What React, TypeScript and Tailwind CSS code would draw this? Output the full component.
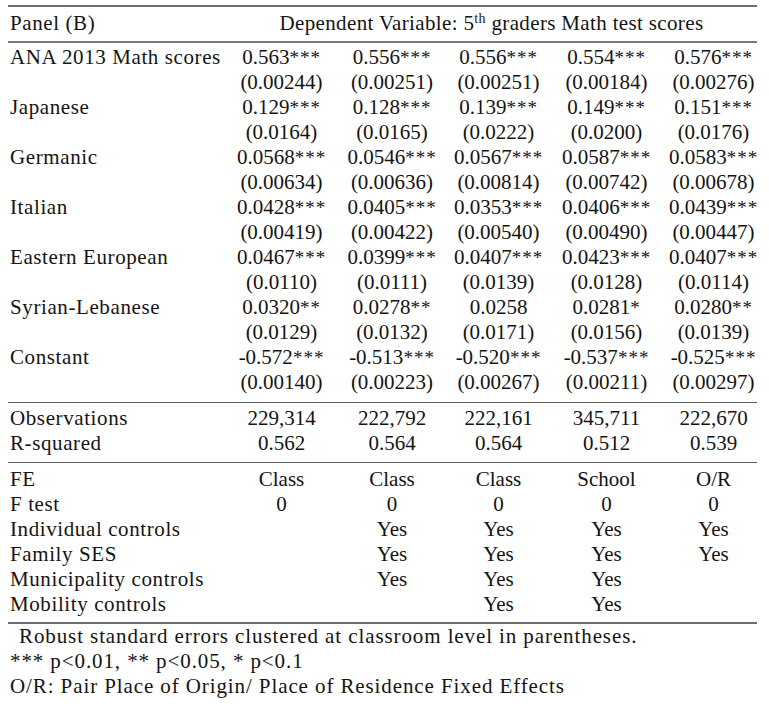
import React from "react";

type Row = { label: string; cells: string[] };

const coefRows: Row[] = [
  { label: "ANA 2013 Math scores", cells: ["0.563***", "0.556***", "0.556***", "0.554***", "0.576***"] },
  { label: "", cells: ["(0.00244)", "(0.00251)", "(0.00251)", "(0.00184)", "(0.00276)"] },
  { label: "Japanese", cells: ["0.129***", "0.128***", "0.139***", "0.149***", "0.151***"] },
  { label: "", cells: ["(0.0164)", "(0.0165)", "(0.0222)", "(0.0200)", "(0.0176)"] },
  { label: "Germanic", cells: ["0.0568***", "0.0546***", "0.0567***", "0.0587***", "0.0583***"] },
  { label: "", cells: ["(0.00634)", "(0.00636)", "(0.00814)", "(0.00742)", "(0.00678)"] },
  { label: "Italian", cells: ["0.0428***", "0.0405***", "0.0353***", "0.0406***", "0.0439***"] },
  { label: "", cells: ["(0.00419)", "(0.00422)", "(0.00540)", "(0.00490)", "(0.00447)"] },
  { label: "Eastern European", cells: ["0.0467***", "0.0399***", "0.0407***", "0.0423***", "0.0407***"] },
  { label: "", cells: ["(0.0110)", "(0.0111)", "(0.0139)", "(0.0128)", "(0.0114)"] },
  { label: "Syrian-Lebanese", cells: ["0.0320**", "0.0278**", "0.0258", "0.0281*", "0.0280**"] },
  { label: "", cells: ["(0.0129)", "(0.0132)", "(0.0171)", "(0.0156)", "(0.0139)"] },
  { label: "Constant", cells: ["-0.572***", "-0.513***", "-0.520***", "-0.537***", "-0.525***"] },
  { label: "", cells: ["(0.00140)", "(0.00223)", "(0.00267)", "(0.00211)", "(0.00297)"] },
];

const fitRows: Row[] = [
  { label: "Observations", cells: ["229,314", "222,792", "222,161", "345,711", "222,670"] },
  { label: "R-squared", cells: ["0.562", "0.564", "0.564", "0.512", "0.539"] },
];

const feRows: Row[] = [
  { label: "FE", cells: ["Class", "Class", "Class", "School", "O/R"] },
  { label: "F test", cells: ["0", "0", "0", "0", "0"] },
  { label: "Individual controls", cells: ["", "Yes", "Yes", "Yes", "Yes"] },
  { label: "Family SES", cells: ["", "Yes", "Yes", "Yes", "Yes"] },
  { label: "Municipality controls", cells: ["", "Yes", "Yes", "Yes", ""] },
  { label: "Mobility controls", cells: ["", "", "Yes", "Yes", ""] },
];

// splits "0.563***" into number + stars so the stars can be styled apart
const Cell = ({ value }: { value: string }) => {
  const m = value.match(/^(.*?)(\*+)$/);
  if (!m) return <span>{value}</span>;
  return (
    <span>
      {m[1]}
      <span className="text-[19px] tracking-[1px]">{m[2]}</span>
    </span>
  );
};

const TableRow = ({ row }: { row: Row }) => (
  <div className="grid grid-cols-[226px_111px_110px_103px_113px_101px] h-[25px] leading-[25px]">
    <div className="pl-[10px] whitespace-nowrap tracking-[0.6px]">{row.label}</div>
    {row.cells.map((c, i) => (
      <div key={i} className="text-center whitespace-nowrap">
        <Cell value={c} />
      </div>
    ))}
  </div>
);

export default function App() {
  return (
    <div className="w-[769px] h-[710px] bg-white text-[#141414] text-[21px] font-['Liberation_Serif'] pt-[5px]">
      {/* top rule */}
      <div className="ml-[8px] w-[749px] h-[2px] bg-[#6f6f6f]" />

      <div className="mt-[4px] flex h-[25px] leading-[25px]">
        <div className="w-[226px] pl-[10px] tracking-[0.6px]">Panel (B)</div>
        <div className="w-[531px] text-center whitespace-nowrap tracking-[0.35px]">
          Dependent Variable: 5<sup className="text-[14px]">th</sup> graders Math test scores
        </div>
      </div>

      <div className="mt-[5px] ml-[8px] w-[749px] h-[2px] bg-[#7a7a7a]" />

      <div className="mt-[2px]">
        {coefRows.map((r, i) => (
          <TableRow key={i} row={r} />
        ))}
      </div>

      <div className="mt-[7px] ml-[8px] w-[749px] h-px bg-[#5f5f5f]" />

      <div className="mt-[3px]">
        {fitRows.map((r, i) => (
          <TableRow key={i} row={r} />
        ))}
      </div>

      <div className="mt-[6px] ml-[8px] w-[749px] h-px bg-[#5f5f5f]" />

      <div className="mt-[4px]">
        {feRows.map((r, i) => (
          <TableRow key={i} row={r} />
        ))}
      </div>

      {/* bottom rule */}
      <div className="mt-[5px] ml-[8px] w-[749px] h-[2px] bg-[#6f6f6f]" />

      <div className="pl-[10px] leading-[25px] whitespace-nowrap tracking-[0.9px]">
        <div className="pl-[9px]">Robust standard errors clustered at classroom level in parentheses.</div>
        <div>*** p&lt;0.01, ** p&lt;0.05, * p&lt;0.1</div>
        <div>O/R: Pair Place of Origin/ Place of Residence Fixed Effects</div>
      </div>
    </div>
  );
}
